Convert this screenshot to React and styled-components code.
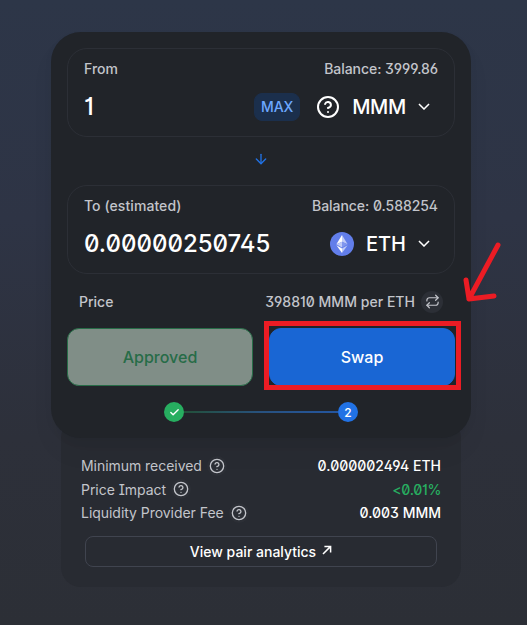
import React from "react";
import styled, { createGlobalStyle } from "styled-components";
import { ArrowDown, Check, CircleHelp, Repeat } from "lucide-react";

const GlobalStyle = createGlobalStyle`
  * { box-sizing: border-box; }
  body {
    margin: 0;
    background: #2c2f36;
    font-family: "Inter", "Liberation Sans", sans-serif;
    font-feature-settings: "ss01" on, "zero" on, "cv08" on, "cv01" on, "cv03" on;
    color: #ffffff;
  }
`;

const Page = styled.main`
  position: relative;
  width: 527px;
  height: 625px;
  padding: 32px 56px 0 51px;
  overflow: hidden;
  background: linear-gradient(180deg, #2d3648 0%, #2e3445 35%, #2d303a 70%, #2c2f36 100%);
`;

const SwapCard = styled.section`
  position: relative;
  z-index: 1;
  width: 420px;
  height: 406px;
  padding: 16px;
  border-radius: 30px;
  background: #212429;
  box-shadow: 0 0 1px rgba(0, 0, 0, 0.01), 0 4px 8px rgba(0, 0, 0, 0.04), 0 16px 24px rgba(0, 0, 0, 0.04);
`;

const TokenPanel = styled.div`
  height: 89px;
  border: 1px solid #2c2f36;
  border-radius: 20px;
  padding: 11px 16px 0;
`;

const Row = styled.div`
  display: flex;
  align-items: center;
  justify-content: space-between;
  height: ${(p) => p.$h}px;
`;

const Label = styled.span`
  font-size: 14px;
  font-weight: 500;
  line-height: 18px;
  letter-spacing: ${(p) => p.$spacing || 0}px;
  color: #c3c5cb;
`;

const AmountRow = styled(Row)`
  margin-top: 10px;
  padding-right: 8px;
`;

const Amount = styled.span`
  flex: 1;
  font-size: 24px;
  font-weight: 500;
  line-height: 28px;
`;

const MaxButton = styled.button`
  width: 46px;
  height: 28px;
  margin-right: 16px;
  padding: 0;
  border: 1px solid #1b2f4c;
  border-radius: 8px;
  background: #1b2f4c;
  color: #6da8ff;
  font: inherit;
  font-size: 14px;
  font-weight: 500;
`;

const TokenName = styled.span`
  margin: 0 12px;
  font-size: 20px;
  font-weight: 500;
  line-height: 24px;
  letter-spacing: ${(p) => p.$spacing || 0}px;
`;

const ArrowRow = styled.div`
  display: flex;
  align-items: center;
  justify-content: center;
  height: 48px;
  padding-bottom: 4px;
  color: #2172e5;
`;

const PriceRow = styled(Row)`
  margin-top: 16px;
  padding: 0 12px;
`;

const PriceValue = styled.span`
  display: flex;
  align-items: center;
  gap: 6px;
`;

const FlipButton = styled.span`
  display: flex;
  align-items: center;
  justify-content: center;
  width: 22px;
  height: 22px;
  border-radius: 50%;
  background: #2c2f36;
  color: #c3c5cb;
`;

const Buttons = styled.div`
  display: grid;
  grid-template-columns: 186px 186px;
  gap: 16px;
  margin-top: 15px;
`;

const ActionButton = styled.button`
  height: 58px;
  padding: 0;
  border: 1px solid ${(p) => (p.$approved ? "#276c47" : "#1966d4")};
  border-radius: 12px;
  background: ${(p) => (p.$approved ? "#808e87" : "#1966d4")};
  color: ${(p) => (p.$approved ? "#276c47" : "#ffffff")};
  font: inherit;
  font-size: 16px;
  font-weight: 500;
`;

const Steps = styled.div`
  display: flex;
  align-items: center;
  justify-content: center;
  margin-top: 16px;
`;

const Step = styled.span`
  display: flex;
  align-items: center;
  justify-content: center;
  width: 20px;
  height: 20px;
  border-radius: 50%;
  background: ${(p) => (p.$done ? "#27ae60" : "#2172e5")};
  font-size: 12px;
  font-weight: 500;
`;

const StepLine = styled.span`
  width: 154px;
  height: 2px;
  background: linear-gradient(90deg, #235039 0%, #28517e 50%, #2456a0 100%);
`;

const Details = styled.section`
  width: 400px;
  height: 169px;
  margin: -20px 0 0 10px;
  padding: 36px 20px 0;
  border-radius: 20px;
  background: #282b32;
`;

const DetailLabel = styled.span`
  display: flex;
  align-items: center;
  gap: 5px;
  font-size: 14px;
  font-weight: 400;
  letter-spacing: -0.04px;
  color: #c3c5cb;
`;

const HelpBadge = styled.span`
  display: flex;
  align-items: center;
  justify-content: center;
  width: 20px;
  height: 20px;
  border-radius: 50%;
  background: #2c2f36;
`;

const DetailValue = styled.span`
  font-size: 14px;
  font-weight: 500;
  letter-spacing: ${(p) => (p.$good ? -0.3 : 0)}px;
  color: ${(p) => (p.$good ? "#27ae60" : "#ffffff")};
`;

const AnalyticsLink = styled.a`
  display: flex;
  align-items: center;
  justify-content: center;
  gap: 6px;
  height: 31px;
  margin: 11px 4px 0;
  border: 1px solid #40444f;
  border-radius: 8px;
  font-size: 14px;
  font-weight: 500;

  svg {
    margin-bottom: 2px;
  }
`;

const Highlight = styled.div`
  position: absolute;
  z-index: 2;
  left: 264px;
  top: 321px;
  width: 197px;
  height: 69px;
  border: 5px solid #ec1c24;
`;

const PointerArrow = styled.svg`
  position: absolute;
  z-index: 2;
  left: 460px;
  top: 238px;
`;

function EthLogo() {
  return (
    <svg width="24" height="24" viewBox="0 0 24 24">
      <circle cx="12" cy="12" r="12" fill="#627eea" />
      <path d="M12 3v6.7l5.6 2.5z" fill="#c0cbf7" />
      <path d="M12 3L6.4 12.2 12 9.7z" fill="#fff" />
      <path d="M12 16.5V21l5.6-7.8z" fill="#c0cbf7" />
      <path d="M12 21v-4.5l-5.6-3.3z" fill="#fff" />
      <path d="M12 15.4l5.6-3.2L12 9.7z" fill="#8197ee" />
      <path d="M6.4 12.2l5.6 3.2V9.7z" fill="#c0cbf7" />
    </svg>
  );
}

function DropdownChevron() {
  return (
    <svg width="12" height="7" viewBox="0 0 12 7" fill="none">
      <path d="M0.97 1L6 6l5.03-5" stroke="#fff" strokeWidth="1.5" />
    </svg>
  );
}

function OutArrow() {
  return (
    <svg width="10" height="10" viewBox="0 0 10 10" fill="none" stroke="#fff" strokeWidth="1.5">
      <path d="M1 9L8.4 1.6M2.4 1.4H8.6V7.4" />
    </svg>
  );
}

export default function App() {
  const details = [
    ["Minimum received", "0.000002494 ETH"],
    ["Price Impact", "<0.01%"],
    ["Liquidity Provider Fee", "0.003 MMM"],
  ];
  return (
    <>
      <GlobalStyle />
      <Page>
        <SwapCard>
          <TokenPanel>
            <Row $h={18}>
              <Label>From</Label>
              <Label $spacing={-0.05}>Balance: 3999.86</Label>
            </Row>
            <AmountRow $h={37}>
              <Amount>1</Amount>
              <MaxButton>MAX</MaxButton>
              <CircleHelp size={24} />
              <TokenName $spacing={-0.3}>MMM</TokenName>
              <DropdownChevron />
            </AmountRow>
          </TokenPanel>
          <ArrowRow>
            <ArrowDown size={16} />
          </ArrowRow>
          <TokenPanel>
            <Row $h={18}>
              <Label $spacing={0.07}>To (estimated)</Label>
              <Label $spacing={-0.05}>Balance: 0.588254</Label>
            </Row>
            <AmountRow $h={37}>
              <Amount>0.00000250745</Amount>
              <EthLogo />
              <TokenName>ETH</TokenName>
              <DropdownChevron />
            </AmountRow>
          </TokenPanel>
          <PriceRow $h={23}>
            <Label>Price</Label>
            <PriceValue>
              <Label $spacing={0.03}>398810 MMM per ETH</Label>
              <FlipButton>
                <Repeat size={15} strokeWidth={1.9} />
              </FlipButton>
            </PriceValue>
          </PriceRow>
          <Buttons>
            <ActionButton $approved>Approved</ActionButton>
            <ActionButton>Swap</ActionButton>
          </Buttons>
          <Steps>
            <Step $done>
              <Check size={11} strokeWidth={3} />
            </Step>
            <StepLine />
            <Step>2</Step>
          </Steps>
        </SwapCard>
        <Details>
          {details.map(([label, value]) => (
            <Row $h={23.5} key={label}>
              <DetailLabel>
                {label}
                <HelpBadge>
                  <CircleHelp size={16} />
                </HelpBadge>
              </DetailLabel>
              <DetailValue $good={value.startsWith("<")}>{value}</DetailValue>
            </Row>
          ))}
          <AnalyticsLink>
            View pair analytics <OutArrow />
          </AnalyticsLink>
        </Details>
        <Highlight />
        <PointerArrow width="45" height="70" viewBox="0 0 45 70" fill="none" stroke="#ec1c24" strokeWidth="5" strokeLinecap="round" strokeLinejoin="round">
          <path d="M38 7L9 61M6 42L9 61L34 58" />
        </PointerArrow>
      </Page>
    </>
  );
}
